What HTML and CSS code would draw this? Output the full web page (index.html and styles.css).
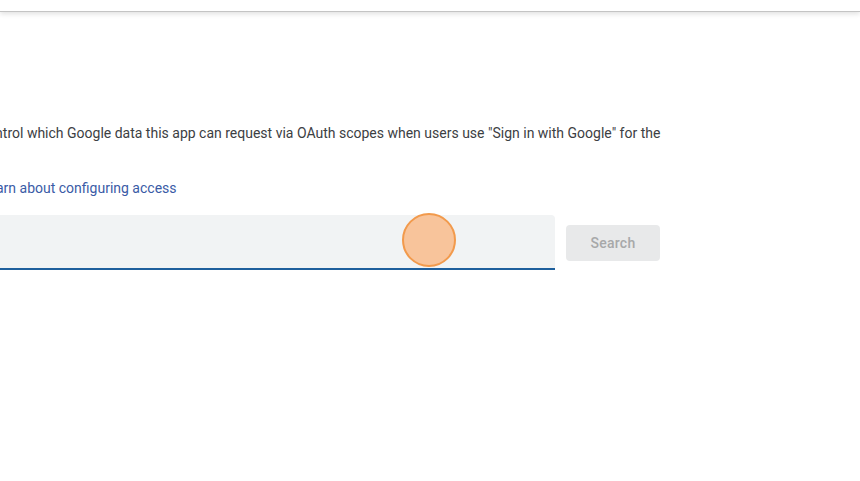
FILE: index.html
```html
<!DOCTYPE html>
<html>
<head>
<meta charset="utf-8">
<link rel="stylesheet" href="styles.css">
</head>
<body>
<header class="topbar"></header>
<main class="content">
  <p class="desc">Control which Google data this app can request via OAuth scopes when users use "Sign in with Google" for the</p>
  <a class="learn" href="#">Learn about configuring access</a>
  <div class="search-row">
    <div class="field">
      <span class="cursor-dot"></span>
    </div>
    <button class="search-btn" disabled>Search</button>
  </div>
</main>
</body>
</html>
```
FILE: styles.css
```css
html, body {
  margin: 0;
  padding: 0;
  background: #ffffff;
  font-family: Roboto, "Liberation Sans", Arial, sans-serif;
  overflow: hidden;
  width: 860px;
  height: 481px;
}
.topbar {
  height: 11px;
  background: #ffffff;
  border-bottom: 1px solid #c4c4c4;
  box-shadow: 0 2px 5px rgba(0, 0, 0, 0.12);
  position: relative;
  z-index: 1;
}
.content {
  margin-left: -17px;
  width: 677px;
  padding-top: 111px;
}
.desc {
  margin: 0 0 0 -5px;
  font-size: 14px;
  line-height: 20px;
  color: #3c4043;
  white-space: nowrap;
}
.learn {
  display: block;
  margin-top: 35px;
  margin-left: -2px;
  font-size: 14px;
  line-height: 20px;
  color: #3a5ba6;
  text-decoration: none;
}
.search-row {
  display: flex;
  align-items: center;
  gap: 11px;
  margin-top: 17px;
}
.field {
  position: relative;
  width: 572px;
  height: 53px;
  background: #f1f3f4;
  border-radius: 4px 4px 0 0;
  border-bottom: 2px solid #1e5f9c;
}
.cursor-dot {
  position: absolute;
  left: 419px;
  top: -2px;
  width: 50px;
  height: 50px;
  border-radius: 50%;
  background: #f8c49b;
  border: 2px solid #f29a4c;
}
.search-btn {
  width: 94px;
  height: 36px;
  border: none;
  border-radius: 4px;
  background: #e8e9ea;
  color: #a7a8a9;
  font-family: Roboto, "Liberation Sans", Arial, sans-serif;
  font-size: 14px;
  font-weight: 500;
  letter-spacing: 0.25px;
  padding: 0;
}
```
